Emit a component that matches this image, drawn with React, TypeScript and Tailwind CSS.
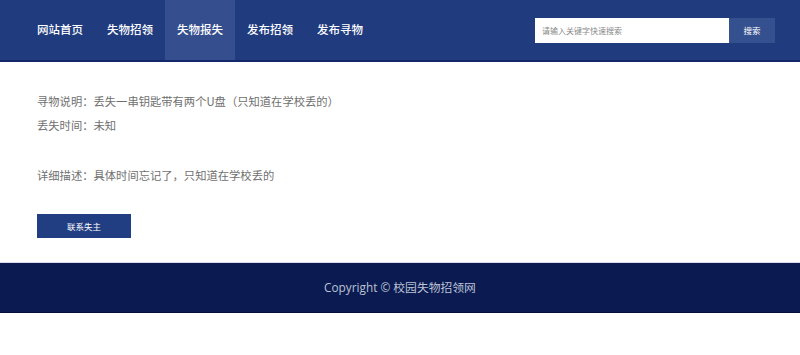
const navItems = ['网站首页', '失物招领', '失物报失', '发布招领', '发布寻物'];

export default function App() {
  return (
    <div className="min-h-[355px] bg-white font-['Noto_Sans_CJK_SC',sans-serif]">
      <header className="h-[62px] bg-[#213c7e] border-b-2 border-[#13276a]">
        <div className="flex h-[60px] items-center justify-between pl-[25px] pr-[25px]">
          <nav className="flex h-full">
            {navItems.map((item, i) => (
              <a
                key={item}
                className={`flex h-full w-[70px] items-center justify-center text-[11.5px] font-medium text-white ${
                  i === 2 ? 'bg-[#354f8e]' : ''
                }`}
              >
                {item}
              </a>
            ))}
          </nav>
          <div className="flex h-[25px]">
            <input
              className="h-full w-[194px] bg-white px-[7px] text-[8px] text-gray-700 outline-none placeholder:text-[#888]"
              placeholder="请输入关键字快速搜索"
            />
            <button className="h-full w-[46px] bg-[#34508f] text-[8.5px] text-white">搜索</button>
          </div>
        </div>
      </header>

      <main className="px-[37px] pt-[27px] pb-[24px] text-[11.3px] text-[#707070]">
        <p className="leading-[24px]">寻物说明：丢失一串钥匙带有两个U盘（只知道在学校丢的）</p>
        <p className="leading-[24px]">丢失时间：未知</p>
        <p className="mt-[26px] leading-[24px]">详细描述：具体时间忘记了，只知道在学校丢的</p>
        <button className="mt-[27px] h-[24px] w-[94px] bg-[#223e82] text-[8.5px] text-white">联系失主</button>
      </main>

      <footer className="flex h-[51px] items-center justify-center border-t border-b border-t-[#dcd8ee] border-b-[#050f38] bg-[#0b1a50] font-['Open_Sans','Noto_Sans_CJK_SC',sans-serif] text-[11.8px] text-[#bcc3d6]">
        Copyright © 校园失物招领网
      </footer>
    </div>
  );
}
